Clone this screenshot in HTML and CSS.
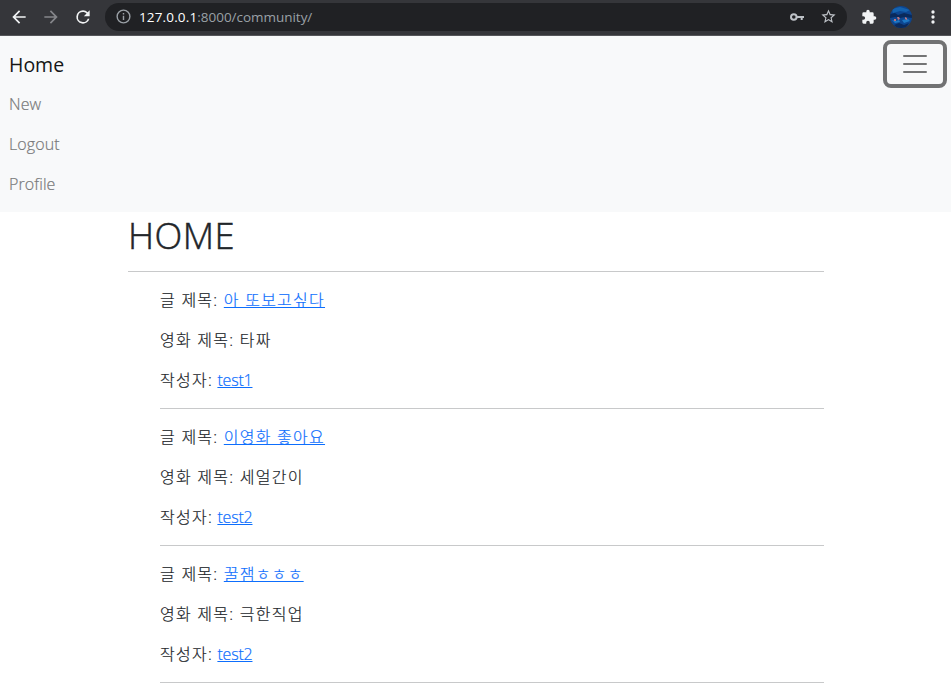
FILE: index.html
```html
<!DOCTYPE html>
<html lang="ko">
<head>
<meta charset="utf-8">
<title>Community</title>
<link rel="stylesheet" href="styles.css">
</head>
<body>
<header class="browser">
  <svg class="icon back" viewBox="0 0 24 24"><path d="M20 11H7.83l5.59-5.59L12 4l-8 8 8 8 1.41-1.41L7.83 13H20z"/></svg>
  <svg class="icon forward" viewBox="0 0 24 24"><path d="M12 4l-1.41 1.41L16.17 11H4v2h12.17l-5.58 5.59L12 20l8-8z"/></svg>
  <svg class="icon reload" viewBox="0 0 24 24"><path d="M17.65 6.35A7.96 7.96 0 0 0 12 4a8 8 0 1 0 7.73 10h-2.08A6 6 0 1 1 12 6c1.66 0 3.14.69 4.22 1.78L13 11h7V4z"/></svg>
  <div class="address">
    <svg class="info" viewBox="0 0 24 24"><path d="M11 7h2v2h-2zm0 4h2v6h-2zm1-9a10 10 0 1 0 0 20 10 10 0 0 0 0-20zm0 18a8 8 0 1 1 0-16 8 8 0 0 1 0 16z"/></svg>
    <span class="url"><b>127.0.0.1</b>:8000/community/</span>
    <svg class="key" viewBox="0 0 14 10"><circle cx="3.800" cy="5" r="2.800"/><path d="M6.600 5H14M11.700 5v3"/></svg>
    <svg class="star" viewBox="0 0 24 24"><path d="M22 9.24l-7.19-.62L12 2 9.190 8.630 2 9.240l5.460 4.730L5.820 21 12 17.270 18.180 21l-1.630-7.030zM12 15.400l-3.760 2.270 1-4.280-3.320-2.880 4.380-.38L12 6.100l1.710 4.040 4.380.38-3.320 2.880 1 4.280z"/></svg>
  </div>
  <svg class="icon puzzle" viewBox="0 0 24 24"><path d="M20.500 11H19V7a2 2 0 0 0-2-2h-4V3.500a2.500 2.500 0 0 0-5 0V5H4a2 2 0 0 0-2 2v3.800h1.500a2.700 2.700 0 0 1 0 5.400H2V20a2 2 0 0 0 2 2h3.800v-1.500a2.700 2.700 0 0 1 5.400 0V22H17a2 2 0 0 0 2-2v-4h1.500a2.500 2.500 0 0 0 0-5z"/></svg>
  <svg class="avatar" viewBox="0 0 22 22">
    <defs><clipPath id="face"><circle cx="11" cy="11" r="11"/></clipPath></defs>
    <g clip-path="url(#face)">
      <path fill="#0d4690" d="M0 0h22v22H0z"/>
      <path fill="#1462ae" d="M2 3l8-2 10 3-4 2-6-1-7 2z"/>
      <path fill="#0a2a5c" d="M0 8l5-1 3 2 6-2 8 2v3l-7-1-5 1-5-1-5 1zM4 19l5-2 5 2 5-2-3 5H7z"/>
      <path fill="#1d78c4" d="M2 14l4 1 3-1 1 2-5 1zM12 14l6-1 2 2-6 2z"/>
      <path fill="#b9747f" d="M7 11l2 0 1 2-2 1zM4 13l2 0v2H4zM15 11l2 1v2l-2-1z"/>
    </g>
  </svg>
  <svg class="icon dots" viewBox="0 0 24 24"><path d="M12 8a2 2 0 1 0 0-4 2 2 0 0 0 0 4zm0 2a2 2 0 1 0 0 4 2 2 0 0 0 0-4zm0 6a2 2 0 1 0 0 4 2 2 0 0 0 0-4z"/></svg>
</header>
<nav class="navbar">
  <div class="menu">
    <a class="brand">Home</a>
    <a class="nav-link">New</a>
    <a class="nav-link">Logout</a>
    <a class="nav-link">Profile</a>
  </div>
  <button class="toggler" aria-label="Toggle navigation">
    <svg viewBox="0 0 30 30"><path d="M4 7h22M4 15h22M4 23h22"/></svg>
  </button>
</nav>
<main class="container">
  <h1>HOME</h1>
  <hr>
  <section class="posts">
    <p>글 제목: <a class="link">아 또보고싶다</a></p>
    <p>영화 제목: 타짜</p>
    <p>작성자: <a class="link latin">test1</a></p>
    <hr>
    <p>글 제목: <a class="link">이영화 좋아요</a></p>
    <p>영화 제목: 세얼간이</p>
    <p>작성자: <a class="link latin">test2</a></p>
    <hr>
    <p>글 제목: <a class="link">꿀잼ㅎㅎㅎ</a></p>
    <p>영화 제목: 극한직업</p>
    <p>작성자: <a class="link latin">test2</a></p>
    <hr>
  </section>
</main>
</body>
</html>
```
FILE: styles.css
```css
* { box-sizing: border-box; }

body {
  margin: 0;
  height: 693px;
  overflow: hidden;
  background: #fff;
  color: #212529;
  font: 300 16px/24px "Open Sans", "Noto Sans CJK KR", sans-serif;
  -webkit-text-stroke: 0.2px currentColor;
}

.browser {
  display: flex;
  align-items: center;
  height: 36px;
  padding: 0 8px 2px 9px;
  background: #35363a;
  border-bottom: 1px solid #55565a;
  color: #f1f3f4;
  -webkit-text-stroke: 0;
}

svg { display: block; flex: none; fill: currentColor; }
.icon { width: 20px; height: 20px; }
.forward { margin-left: 12px; color: #85868a; }
.reload { margin-left: 12px; }

.address {
  display: flex;
  align-items: center;
  width: 742px;
  height: 28px;
  margin-left: 12px;
  padding: 0 10px;
  border-radius: 14px;
  background: #202124;
  color: #bdc1c6;
}

.info { width: 17px; height: 17px; color: #9aa0a6; }
.url {
  flex: 1;
  margin-left: 7px;
  color: #9aa0a6;
  font: 400 13.5px/20px "Open Sans", sans-serif;
  letter-spacing: -0.03px;
}
.url b { color: #fff; font-weight: 400; letter-spacing: 0.15px; }
.key { width: 14px; height: 10px; fill: none; stroke: currentColor; stroke-width: 2; }
.star { width: 17px; height: 17px; margin-left: 16px; }
.puzzle { width: 16px; height: 16px; margin-left: 14px; }
.avatar { width: 22px; height: 22px; margin-left: 13px; }
.dots { margin-left: 11px; }

.navbar {
  display: flex;
  justify-content: space-between;
  align-items: flex-start;
  height: 176px;
  padding: 4px 4px 8px 9px;
  background: #f8f9fa;
}

.menu { display: flex; flex-direction: column; padding-top: 5px; }
.brand {
  margin-bottom: 3px;
  color: #151617;
  font-size: 19.500px;
  font-weight: 400;
  line-height: 40px;
  -webkit-text-stroke: 0;
}
.nav-link { color: #777879; line-height: 40px; letter-spacing: 0.1px; }
.menu .brand + .nav-link { margin-top: -4px; }

.toggler {
  display: flex;
  align-items: center;
  justify-content: center;
  width: 64px;
  height: 48px;
  padding: 0;
  border: 4px solid #717273;
  border-radius: 8px;
  background: #f8f9fa;
}
.toggler svg { width: 30px; height: 30px; fill: none; stroke: #737475; stroke-width: 2; stroke-linecap: round; }

.container { width: 696px; margin: 0 0 0 128px; }
h1 { margin: 0; font-size: 36.3px; font-weight: 300; line-height: 43px; padding-top: 2px; height: 43px; letter-spacing: 0.4px; -webkit-text-stroke: 0.5px currentColor; }
hr { height: 1px; margin: 16px 0; border: 0; background: #c8c9ca; }
.posts { padding-left: 32px; }
p { margin: 0 0 16px; letter-spacing: 1.25px; }
.link { color: #0d6efd; text-decoration: underline; }
.latin { letter-spacing: -0.2px; margin-left: -1px; }
```
